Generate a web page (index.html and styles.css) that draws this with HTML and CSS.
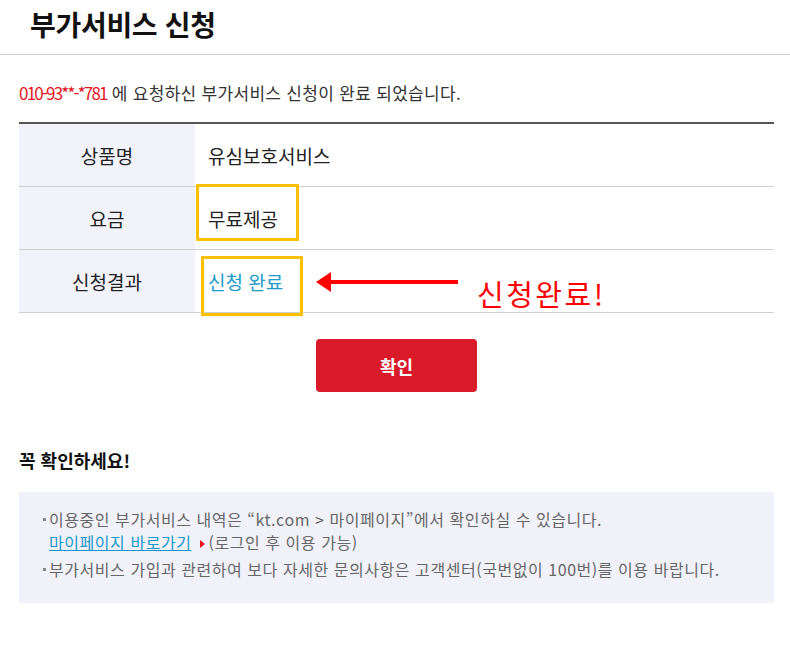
FILE: index.html
```html
<!DOCTYPE html>
<html lang="ko">
<head>
  <meta charset="utf-8">
  <title>부가서비스 신청</title>
  <link rel="stylesheet" href="styles.css">
</head>
<body>
  <header class="page-head">
    <h1>부가서비스 신청</h1>
  </header>

  <main class="content">
    <p class="result-msg"><span class="phone">010-93**-*781</span> 에 요청하신 부가서비스 신청이 완료 되었습니다.</p>

    <table class="result-table">
      <tr>
        <th>상품명</th>
        <td>유심보호서비스</td>
      </tr>
      <tr>
        <th>요금</th>
        <td>무료제공</td>
      </tr>
      <tr>
        <th>신청결과</th>
        <td class="done">신청 완료</td>
      </tr>
    </table>

    <div class="btn-area">
      <button class="btn-ok">확인</button>
    </div>

    <h2 class="notice-title">꼭 확인하세요!</h2>
    <div class="notice-box">
      <ul>
        <li>이용중인 부가서비스 내역은 “kt.com &gt; 마이페이지”에서 확인하실 수 있습니다.<br>
          <a href="#" class="link">마이페이지 바로가기</a><span class="tri"></span>(로그인 후 이용 가능)</li>
        <li>부가서비스 가입과 관련하여 보다 자세한 문의사항은 고객센터(국번없이 100번)를 이용 바랍니다.</li>
      </ul>
    </div>
  </main>

  <!-- annotation overlay -->
  <div class="mark mark-fee"></div>
  <div class="mark mark-result"></div>
  <div class="arrow">
    <svg width="142" height="20" viewBox="0 0 142 20">
      <polygon points="0,10 15,0 15,20" fill="#ff0000"/>
      <rect x="12" y="8" width="130" height="4" fill="#ff0000"/>
    </svg>
  </div>
  <div class="arrow-label">신청완료!</div>
</body>
</html>
```

FILE: styles.css
```css
html, body {
  margin: 0;
}
body {
  position: relative;
  background: #fff;
  color: #222;
  font-family: "Noto Sans CJK KR", "Noto Sans", sans-serif;
}
.page-head {
  height: 54px;
  border-bottom: 1px solid #d0d0d0;
  padding-left: 30px;
}
.page-head h1 {
  margin: 0;
  font-size: 28px;
  line-height: 48px;
  font-weight: bold;
  color: #111;
  letter-spacing: -0.3px;
}
.content {
  width: 755px;
  margin-left: 19px;
}
.result-msg {
  margin: 22px 0 0;
  font-size: 17px;
  line-height: 32px;
  color: #333;
  letter-spacing: 0.3px;
}
.phone {
  color: #e8141e;
  letter-spacing: -1.8px;
}
.result-table {
  width: 100%;
  margin-top: 13px;
  border-collapse: collapse;
  border-top: 2px solid #555;
}
.result-table th,
.result-table td {
  height: 62px;
  padding: 0;
  border-bottom: 1px solid #cfcfcf;
  font-size: 19px;
  font-weight: normal;
  color: #222;
}
.result-table th {
  width: 176px;
  background: #f2f3fa;
  text-align: center;
}
.result-table td {
  padding-left: 13px;
  text-align: left;
}
.result-table td.done {
  color: #229bc9;
}
.btn-area {
  margin-top: 26px;
  text-align: center;
}
.btn-ok {
  width: 161px;
  height: 53px;
  border: 0;
  border-radius: 4px;
  background: #d91a29;
  color: #fff;
  font-family: inherit;
  font-size: 18px;
  font-weight: bold;
}
.notice-title {
  margin: 56px 0 0;
  font-size: 18px;
  line-height: 24px;
  font-weight: bold;
  color: #111;
}
.notice-box {
  margin-top: 20px;
  background: #f1f2f9;
  padding: 16px 0 22px 24px;
}
.notice-box ul {
  margin: 0;
  padding: 0;
  list-style: none;
}
.notice-box li {
  position: relative;
  padding-left: 6px;
  font-size: 16px;
  line-height: 23px;
  color: #666;
  letter-spacing: 0.55px;
}
.notice-box li + li {
  margin-top: 4px;
}
.notice-box li::before {
  content: "";
  position: absolute;
  left: 0;
  top: 10px;
  width: 3px;
  height: 3px;
  background: #888;
}
.link {
  color: #1a96c8;
  text-decoration: underline;
}
.tri {
  display: inline-block;
  margin: 0 3px 0 9px;
  width: 0;
  height: 0;
  border-top: 4px solid transparent;
  border-bottom: 4px solid transparent;
  border-left: 5px solid #e8141e;
  vertical-align: 1px;
}

/* annotations drawn on top of the captured page */
.mark {
  position: absolute;
  border: 3px solid #ffc000;
  box-sizing: border-box;
}
.mark-fee {
  left: 196px;
  top: 184px;
  width: 103px;
  height: 57px;
}
.mark-result {
  left: 201px;
  top: 256px;
  width: 102px;
  height: 60px;
}
.arrow {
  position: absolute;
  left: 316px;
  top: 272px;
  line-height: 0;
}
.arrow-label {
  position: absolute;
  left: 477px;
  top: 274px;
  font-size: 29px;
  line-height: 38px;
  color: #ff0000;
  letter-spacing: 2.5px;
}
```
